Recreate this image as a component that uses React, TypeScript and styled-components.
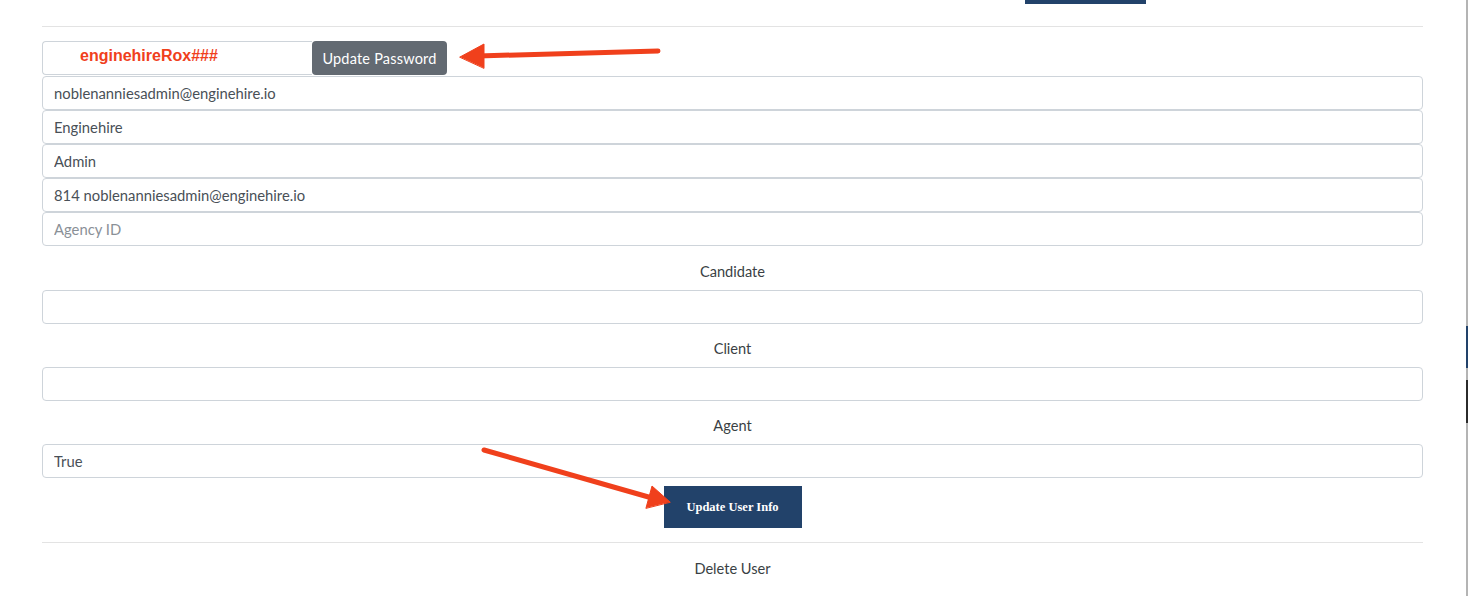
import { FC } from 'react';
import styled, { createGlobalStyle } from 'styled-components';

const GlobalStyle = createGlobalStyle`
  html, body { margin: 0; padding: 0; background: #fff; }
  body { font-family: 'Lato', 'Open Sans', sans-serif; }
  * { box-sizing: border-box; }
`;

const Page = styled.div`
  position: relative;
  display: flex;
  width: 1469px;
  height: 596px;
  overflow: hidden;
  background: #fff;
`;

const Main = styled.div`
  flex: 1;
  padding: 0 43px 0 42px;
`;

const EdgeStrip = styled.div`
  width: 2px;
  margin-right: 1px;
  background: linear-gradient(
    to bottom,
    #b4b4b4 0, #b4b4b4 326px,
    #22426a 326px, #22426a 368px,
    #b4b4b4 368px, #b4b4b4 380px,
    #2b2b2b 380px, #2b2b2b 423px,
    #b4b4b4 423px
  );
`;

const TopBar = styled.div`
  height: 4px;
  padding-left: 983px;
  display: flex;
`;

const NavButton = styled.div`
  width: 121px;
  height: 4px;
  background: #22426a;
`;

const Rule = styled.hr<{ $top: number; $bottom: number }>`
  border: 0;
  border-top: 1px solid #e3e3e3;
  margin: ${({ $top, $bottom }) => `${$top}px 0 ${$bottom}px`};
`;

const PasswordRow = styled.div`
  display: flex;
  height: 34px;
  margin-bottom: 1px;
`;

const PasswordInput = styled.input`
  width: 270px;
  height: 34px;
  border: 1px solid #ced4da;
  border-right: none;
  border-radius: 4px 0 0 4px;
  padding: 0 0 5px 37px;
  font-family: 'Liberation Sans', Arial, sans-serif;
  font-weight: bold;
  font-size: 16px;
  color: #f0401c;
  outline: none;
`;

const SecondaryButton = styled.button`
  height: 34px;
  width: 135px;
  border: none;
  border-radius: 4px;
  background: #636a72;
  color: #fff;
  font-family: 'Lato', sans-serif;
  font-size: 14.5px;
  padding: 0;
  letter-spacing: 0.2px;
`;

const FieldStack = styled.div`
  padding-bottom: 1px;
`;

const Field = styled.input`
  display: block;
  width: 100%;
  height: 34px;
  border: 1px solid #ced4da;
  border-radius: 4px;
  padding: 0 11px;
  font-family: 'Lato', sans-serif;
  font-size: 14.8px;
  color: #495057;
  outline: none;
  &::placeholder { color: #8a9097; }
`;

const Label = styled.div<{ $top?: number }>`
  margin: ${({ $top = 13 }) => `${$top}px 0 6px`};
  line-height: 24px;
  text-align: center;
  font-size: 14.6px;
  color: #3a3f44;
`;

const ButtonRow = styled.div`
  display: flex;
  justify-content: center;
  padding: 8px 0 0 0;
`;

const PrimaryButton = styled.button`
  width: 138px;
  height: 42px;
  border: none;
  background: #22426a;
  color: #fff;
  font-family: 'Liberation Serif', 'Times New Roman', serif;
  font-weight: bold;
  font-size: 12.5px;
  padding: 0;
`;

const Overlay = styled.svg`
  position: absolute;
  left: 0;
  top: 0;
  pointer-events: none;
`;

const Arrows: FC = () => (
  <Overlay width={1469} height={596} viewBox={'0 0 1469 596'}>
    <g fill={'#f0401c'} stroke={'#f0401c'} strokeLinecap={'round'}>
      <line x1={658} y1={51} x2={478} y2={56} strokeWidth={5} />
      <path d="M460 57 L484 44 L484 68 Z" strokeWidth={1} />
      <line x1={484} y1={450} x2={652} y2={498} strokeWidth={5} />
      <path d="M670 502 L652 486 L646 508 Z" strokeWidth={1} />
    </g>
  </Overlay>
);

const fields = [
  { value: 'noblenanniesadmin@enginehire.io' },
  { value: 'Enginehire' },
  { value: 'Admin' },
  { value: '814 noblenanniesadmin@enginehire.io' },
  { value: '', placeholder: 'Agency ID' }
];

const roles = [
  { label: 'Candidate', value: '' },
  { label: 'Client', value: '' },
  { label: 'Agent', value: 'True' }
];

const App: FC = () => (
  <>
    <GlobalStyle />
    <Page>
      <Main>
        <TopBar>
          <NavButton />
        </TopBar>
        <Rule $top={22} $bottom={14} />
        <PasswordRow>
          <PasswordInput readOnly value={'enginehireRox###'} />
          <SecondaryButton>Update Password</SecondaryButton>
        </PasswordRow>
        <FieldStack>
          {fields.map(({ value, placeholder }) => (
            <Field key={placeholder || value} readOnly value={value} placeholder={placeholder} />
          ))}
        </FieldStack>
        {roles.map(({ label, value }) => (
          <div key={label}>
            <Label>{label}</Label>
            <Field readOnly value={value} />
          </div>
        ))}
        <ButtonRow>
          <PrimaryButton>Update User Info</PrimaryButton>
        </ButtonRow>
        <Rule $top={14} $bottom={0} />
        <Label $top={14}>Delete User</Label>
      </Main>
      <EdgeStrip />
      <Arrows />
    </Page>
  </>
);

export default App;
